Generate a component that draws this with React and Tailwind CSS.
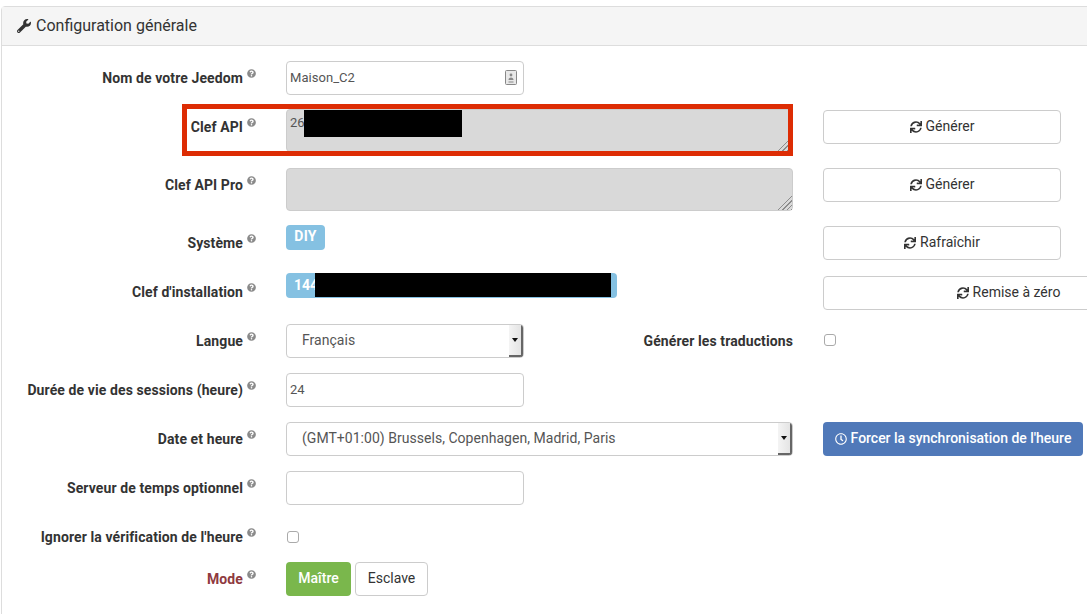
import React from "react";
import { FaWrench, FaSync, FaQuestionCircle, FaRegClock } from "react-icons/fa";

const inputClass = "w-[238px] h-[34px] rounded-[4px] border border-[#ccc] bg-white pl-[3px] pr-[4px] pb-[1px] text-[13px] tracking-[0.05px] text-[#555] outline-none";
const areaClass = "ml-[30px] w-[507px] h-[43px] shrink-0 rounded-[4px] border border-[#ccc] bg-[#d9d9d9] pl-[3px] pr-[4px] py-[3px] text-[13px] text-[#555] outline-none [&::-webkit-resizer]:[background:linear-gradient(135deg,#d9d9d9_52%,transparent_52%),repeating-linear-gradient(135deg,#d9d9d9_0,#d9d9d9_2px,#8c8c8c_2px,#8c8c8c_3px)]";

const Label = ({ text, className = "", textClass = "text-[#333]" }) => (
  <div className={`w-[256px] h-[34px] shrink-0 flex items-center justify-end ${className}`}>
    <span className={`text-[14px] font-bold tracking-[0.1px] ${textClass}`}>{text}</span>
    <FaQuestionCircle className="ml-[4px] mb-[10px] w-[9px] h-[9px] text-[#8a8a8a]" />
  </div>
);

const RefreshButton = ({ text, className = "w-[238px]" }) => (
  <button type="button" className={`h-[34px] shrink-0 rounded-[4px] border border-[#ccc] bg-white pb-[1px] flex items-center justify-center gap-[4px] text-[14px] text-[#333] ${className}`}>
    <FaSync className="w-[12px] h-[12px] text-[#333]" />
    {text}
  </button>
);

const SelectBox = ({ text, className }) => (
  <div className={`h-[34px] shrink-0 rounded-[4px] border border-[#ccc] bg-white flex items-center overflow-hidden ${className}`}>
    <span className="flex-1 pl-[15px] pb-[1px] text-[14px] tracking-[0.03px] text-[#555]">{text}</span>
    <div className="w-[14px] h-full flex items-center justify-center bg-gradient-to-r from-[#f4f4f4] to-[#e4e4e4] border-r-2 border-b-2 border-[#666]">
      <svg width="6" height="4" viewBox="0 0 6 4"><path d="M0 0h6L3 4z" fill="#111" /></svg>
    </div>
  </div>
);

const ContactIcon = () => (
  <svg width="12" height="15" viewBox="0 0 12 15" className="absolute left-[219px] top-[9px]">
    <rect x="0.5" y="0.5" width="11" height="14" rx="1" fill="#e8e8e8" stroke="#888" />
    <circle cx="6" cy="5" r="1.4" fill="#888" />
    <path d="M3.5 10c0-1.600 1-2.500 2.500-2.500s2.500 .9 2.500 2.500z" fill="#888" />
    <path d="M3.500 12h5" stroke="#888" />
  </svg>
);

export default function App() {
  return (
    <div className="relative w-[1087px] h-[614px] overflow-hidden bg-white font-['Roboto',sans-serif] pt-[6px] pl-[1px]">
      <div className="w-[1200px] h-[700px] border border-[#ddd] rounded-tl-[4px]">
        {/* Panel header */}
        <div className="h-[39px] bg-[#f5f5f5] border-b border-[#ddd] flex items-center pl-[15px] text-[16px] text-[#333]">
          <FaWrench className="w-[14px] h-[14px] mr-[5px]" />
          Configuration générale
        </div>

        <div className="-ml-[2px]">
          {/* Nom */}
          <div className="flex items-start mt-[15px] h-[34px]">
            <Label text="Nom de votre Jeedom" />
            <div className="relative ml-[30px]">
              <input readOnly value="Maison_C2" className={inputClass} />
              <ContactIcon />
            </div>
          </div>

          {/* Clef API */}
          <div className="flex items-start mt-[14px] h-[44px]">
            <Label text="Clef API" className="mt-[1px]" />
            <textarea readOnly value="26" className={areaClass} />
            <RefreshButton text="Générer" className="w-[238px] ml-[30px] mt-[1px]" />
          </div>

          {/* Clef API Pro */}
          <div className="flex items-start mt-[15px] h-[44px]">
            <Label text="Clef API Pro" />
            <textarea readOnly value="" className={areaClass} />
            <RefreshButton text="Générer" className="w-[238px] ml-[30px]" />
          </div>

          {/* Système */}
          <div className="flex items-start mt-[12px] h-[36px]">
            <Label text="Système" className="mt-[2px]" />
            <div className="ml-[30px] w-[507px] shrink-0">
              <span className="inline-block w-[39px] h-[25px] rounded-[4px] bg-[#85c1e2] text-center text-[14px] leading-[23px] font-bold tracking-[0.2px] text-white">DIY</span>
            </div>
            <RefreshButton text="Rafraîchir" className="w-[238px] ml-[30px] mt-[2px]" />
          </div>

          {/* Clef d'installation */}
          <div className="flex items-start mt-[13px] h-[36px]">
            <Label text="Clef d'installation" className="mt-[2px]" />
            <div className="ml-[30px] w-[507px] shrink-0">
              <span className="block w-[331px] h-[25px] rounded-[4px] bg-[#85c1e2] px-[8px] text-[14px] leading-[25px] font-bold text-white">144</span>
            </div>
            <RefreshButton text="Remise à zéro" className="w-[371px] ml-[30px] mt-[3px]" />
          </div>

          {/* Langue */}
          <div className="flex items-start mt-[15px] h-[34px]">
            <Label text="Langue" />
            <SelectBox text="Français" className="ml-[30px] w-[238px]" />
            <div className="w-[269px] shrink-0 h-[34px] flex items-center justify-end text-[14px] font-bold tracking-[0.1px] text-[#333]">Générer les traductions</div>
            <input type="checkbox" readOnly className="ml-[31px] mt-[10px] w-[12px] h-[12px] appearance-none rounded-[3px] border border-[#aaa] bg-white" />
          </div>

          {/* Sessions */}
          <div className="flex items-start mt-[15px] h-[34px]">
            <Label text="Durée de vie des sessions (heure)" />
            <input readOnly value="24" className={`ml-[30px] ${inputClass}`} />
          </div>

          {/* Date et heure */}
          <div className="flex items-start mt-[15px] h-[35px]">
            <Label text="Date et heure" />
            <SelectBox text="(GMT+01:00) Brussels, Copenhagen, Madrid, Paris" className="ml-[30px] w-[507px]" />
            <button type="button" className="ml-[30px] w-[260px] h-[34px] shrink-0 rounded-[4px] bg-[#5079b9] pb-[1px] flex items-center justify-center gap-[4px] text-[14px] font-medium tracking-[-0.02px] text-white">
              <FaRegClock className="w-[12px] h-[12px]" />
              Forcer la synchronisation de l'heure
            </button>
          </div>

          {/* Serveur de temps */}
          <div className="flex items-start mt-[14px] h-[34px]">
            <Label text="Serveur de temps optionnel" />
            <input readOnly value="" className={`ml-[30px] ${inputClass}`} />
          </div>

          {/* Ignorer */}
          <div className="flex items-start mt-[15px] h-[34px]">
            <Label text="Ignorer la vérification de l'heure" />
            <input type="checkbox" readOnly className="ml-[31px] mt-[11px] w-[12px] h-[12px] appearance-none rounded-[3px] border border-[#aaa] bg-white" />
          </div>

          {/* Mode */}
          <div className="flex items-start mt-[8px] h-[34px]">
            <Label text="Mode" textClass="text-[#8f3a3f]" />
            <button type="button" className="ml-[30px] w-[65px] h-[34px] rounded-[4px] bg-[#7ab74c] pb-[1px] text-[14px] font-medium text-white">Maître</button>
            <button type="button" className="ml-[4px] w-[73px] h-[34px] rounded-[4px] border border-[#ccc] bg-white pb-[1px] text-[14px] text-[#333]">Esclave</button>
          </div>
        </div>
      </div>

      {/* Masked values and the red highlight lying over the form */}
      <div className="absolute left-[304px] top-[110px] w-[158px] h-[27px] bg-black" />
      <div className="absolute left-[315px] top-[273px] w-[296px] h-[24px] bg-black" />
      <div className="absolute left-[182px] top-[104px] w-[611px] h-[52px] border-[5px] border-[#dd2c04]" />
    </div>
  );
}
